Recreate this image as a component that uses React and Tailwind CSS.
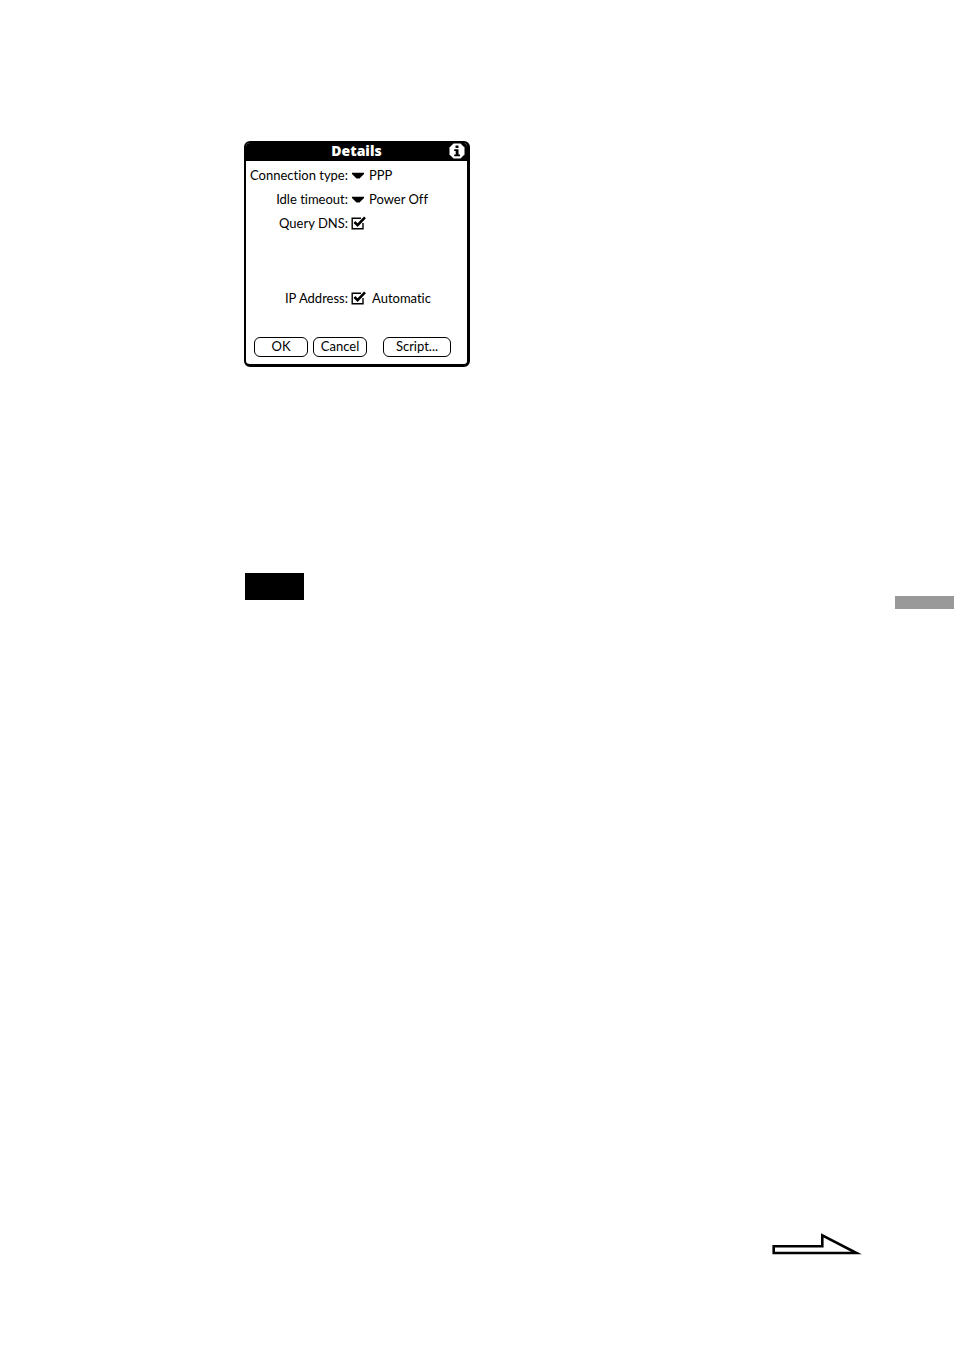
import React, { useState } from 'react';

const buttonClass =
  'h-5 rounded-md border border-black bg-white pb-[2px] text-center text-[13px] leading-4 text-black';

function Row({ id, label, children }) {
  return (
    <div className="flex h-6 items-center">
      <label htmlFor={id} className="w-[102px] shrink-0 text-right whitespace-nowrap">
        {label}
      </label>
      {children}
    </div>
  );
}

function Dropdown({ id, value, options, onChange }) {
  return (
    <div className="relative ml-1 flex items-center">
      <svg className="pointer-events-none absolute left-0 h-2 w-3" viewBox="0 0 12 8">
        <path d="M0 1.8H12V3L7.5 7.5H4.5L0 3Z" fill="#000" />
      </svg>
      <select
        id={id}
        value={value}
        onChange={e => onChange(e.target.value)}
        className="appearance-none bg-transparent pl-[17px] outline-none"
      >
        {options.map(o => (
          <option key={o}>{o}</option>
        ))}
      </select>
    </div>
  );
}

function Checkbox({ id, checked, onChange }) {
  return (
    <div className="relative ml-[3px] h-4 w-4">
      <input
        id={id}
        type="checkbox"
        checked={checked}
        onChange={e => onChange(e.target.checked)}
        className="block h-4 w-4 appearance-none"
      />
      <svg className="pointer-events-none absolute inset-0 h-4 w-4" viewBox="0 0 16 16" fill="none" stroke="#000">
        <path d="M10 3.2H1.2V13.8H12V8" strokeWidth="1.4" />
        {checked && <path d="M3.4 7L6.6 10.2L14 2.4" strokeWidth="2.6" />}
      </svg>
    </div>
  );
}

function DetailsDialog() {
  const [connection, setConnection] = useState('PPP');
  const [timeout, setIdleTimeout] = useState('Power Off');
  const [queryDns, setQueryDns] = useState(true);
  const [automatic, setAutomatic] = useState(true);

  return (
    <section className="w-full max-w-[226px] overflow-hidden rounded-md border-2 border-r-3 border-b-3 border-black bg-white text-[13px] leading-4 [font-variant-ligatures:none]">
      <header className="relative flex h-[18px] justify-center bg-black text-white">
        <h1 className="font-['Open_Sans',sans-serif] text-[14px] leading-4 font-extrabold">Details</h1>
        <button type="button" aria-label="Info" className="absolute right-[2px] top-0">
          <svg className="h-4 w-4" viewBox="0 0 16 16">
            <path d="M4.5 0.5H11.5L15.5 4.5V11.5L11.5 15.5H4.5L0.5 11.5V4.5Z" fill="#fff" />
            <path d="M6.5 2.5H9.5V5H6.5ZM5.2 6.3H9.5V11.5H11V13.3H5.2V11.5H6.7V8H5.2Z" fill="#000" />
          </svg>
        </button>
      </header>

      <div className="pt-[2px]">
        <Row id="connection" label="Connection type:">
          <Dropdown id="connection" value={connection} options={['PPP', 'SLIP', 'CSLIP']} onChange={setConnection} />
        </Row>
        <Row id="timeout" label="Idle timeout:">
          <Dropdown
            id="timeout"
            value={timeout}
            options={['Power Off', '1 Minute', '2 Minutes', 'Never']}
            onChange={setIdleTimeout}
          />
        </Row>
        <Row id="dns" label="Query DNS:">
          <Checkbox id="dns" checked={queryDns} onChange={setQueryDns} />
        </Row>
      </div>

      <div className="mt-[51px]">
        <Row id="ip" label="IP Address:">
          <Checkbox id="ip" checked={automatic} onChange={setAutomatic} />
          <span className="ml-[5px]">Automatic</span>
        </Row>
      </div>

      <div className="mt-[27px] mb-[7px] flex pl-2">
        <button type="button" className={`${buttonClass} w-[54px]`}>OK</button>
        <button type="button" className={`${buttonClass} ml-[5px] w-[54px]`}>Cancel</button>
        <button type="button" className={`${buttonClass} ml-4 w-[68px]`}>Script...</button>
      </div>
    </section>
  );
}

export default function App() {
  return (
    <main className="flex min-h-screen flex-col bg-white pt-[141px] font-[Lato,sans-serif] text-black">
      <div className="pl-[244px]">
        <DetailsDialog />
      </div>

      <div className="mt-[206px] flex items-start justify-between pl-[245px]">
        <div className="h-[27px] w-[59px] bg-black" />
        <div className="mt-[23px] h-[13px] w-[59px] bg-[#999999]" />
      </div>

      <a href="#next" aria-label="Next page" className="mt-auto mr-[92px] mb-24 self-end">
        <svg className="h-6 w-[90px]" viewBox="0 0 90 24" fill="none" stroke="#000" strokeWidth="2.6" strokeMiterlimit="10">
          <path d="M1.7 14.2H50.3V3.3L84.5 21H1.7Z" />
        </svg>
      </a>
    </main>
  );
}
